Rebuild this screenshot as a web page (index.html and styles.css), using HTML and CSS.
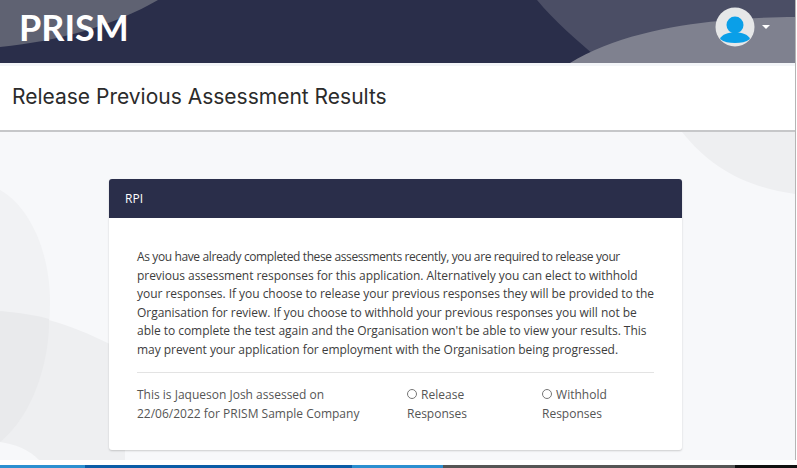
FILE: index.html
```html
<!DOCTYPE html>
<html lang="en">
<head>
  <meta charset="UTF-8">
  <title>Release Previous Assessment Results</title>
  <meta name="viewport" content="width=device-width, initial-scale=1.0">
  <link rel="stylesheet" href="styles.css">
</head>
<body>
  <div class="page">
    <header class="topbar">
      <svg class="topbar-bg" width="795" height="63" viewBox="0 0 795 63" aria-hidden="true">
        <path d="M0 0H158C115 25 60 41 0 47Z" fill="#5f6272"/>
        <path d="M537 0H795V63H603C575 38 555 22 537 0Z" fill="#4b4e65"/>
        <path d="M570 63C610 38 670 25 720 21C750 18 775 17 795 17V63Z" fill="#7f818f"/>
      </svg>
      <div class="logo">PRISM</div>
      <div class="user">
        <svg class="avatar" width="40" height="40" viewBox="0 0 40 40" aria-hidden="true">
          <circle cx="20" cy="20" r="19.5" fill="#e6e7e8"/>
          <circle cx="20" cy="18" r="8.5" fill="#0a9fe8"/>
          <path d="M5 32C7 27 13 25.5 20 25.5C27 25.5 33 27 35 32C31 35 26 36 20 36C14 36 9 35 5 32Z" fill="#0a9fe8"/>
        </svg>
        <span class="caret"></span>
      </div>
    </header>

    <div class="titlebar">
      <h1>Release Previous Assessment Results</h1>
    </div>

    <main class="content">
      <svg class="content-bg" width="795" height="329" viewBox="0 0 795 329" aria-hidden="true">
        <path d="M682 0H795V62C745 55 710 35 682 0Z" fill="#eeeff1"/>
        <path d="M0 58C30 75 50 120 50 170C50 235 30 285 0 310Z" fill="#f1f2f4"/>
        <path d="M0 179C45 183 85 198 125 220V329H40C30 318 15 312 0 310Z" fill="#eeeff1"/>
        <path d="M0 179C20 181 35 183 49 187C50 210 42 275 0 310Z" fill="#e9eaec"/>
      </svg>

      <section class="card">
        <div class="card-head">RPI</div>
        <div class="card-body">
          <p class="intro"><span class="intro-lead">As you have already completed these assessments recently, you are required to release your</span><br>previous assessment responses for this application. Alternatively you can elect to withhold<br>your responses. If you choose to release your previous responses they will be provided to the<br>Organisation for review. If you choose to withhold your previous responses you will not be<br>able to complete the test again and the Organisation won't be able to view your results. This<br>may prevent your application for employment with the Organisation being progressed.</p>
          <hr class="divider">
          <div class="choice-row">
            <div>This is Jaqueson Josh assessed on 22/06/2022 for PRISM Sample Company</div>
            <label class="choice"><input type="radio" name="release"> Release Responses</label>
            <label class="choice"><input type="radio" name="release"> Withhold Responses</label>
          </div>
        </div>
      </section>
    </main>
  </div>

  <div class="gap"></div>
  <div class="taskbar">
    <span class="seg seg-blue1"></span>
    <span class="seg seg-blue2"></span>
    <span class="seg seg-blue3"></span>
    <span class="seg seg-grey"></span>
    <span class="seg seg-black"></span>
  </div>
</body>
</html>
```

FILE: styles.css
```css
* { box-sizing: border-box; }
html, body { height: 100%; }
body {
  margin: 0;
  height: 468px;
  overflow: hidden;
  display: flex;
  flex-direction: column;
  background: #fff;
  font-family: 'Open Sans', sans-serif;
  color: #444;
}
.page {
  width: 796px;
  height: 460px;
  display: flex;
  flex-direction: column;
  border-right: 1px solid #b5b5b5;
}

/* header */
.topbar {
  position: relative;
  height: 63px;
  flex: none;
  display: flex;
  align-items: center;
  justify-content: space-between;
  padding: 0 25px 0 19px;
  background: #2a2e4a;
  overflow: hidden;
}
.topbar-bg { position: absolute; left: 0; top: 0; }
.logo {
  position: relative;
  margin-top: -9px;
  font-family: 'Lato', sans-serif;
  font-size: 36px;
  font-weight: 700;
  color: #fff;
}
.user {
  position: relative;
  margin-top: -10px;
  display: flex;
  align-items: center;
  gap: 7px;
}
.avatar { display: block; }
.caret {
  width: 0;
  height: 0;
  border-left: 4px solid transparent;
  border-right: 4px solid transparent;
  border-top: 4px solid #fff;
}

/* page title */
.titlebar {
  flex: none;
  height: 69px;
  padding: 3px 0 4px;
  border-bottom: 2px solid #c6c7c9;
  background: linear-gradient(#f3f5f8 3px, #fff 3px);
  display: flex;
  align-items: center;
}
.titlebar h1 {
  margin: 0 0 0 12px;
  font-family: 'Inter', sans-serif;
  font-size: 21px;
  font-weight: 400;
  color: #2b2b2b;
}

/* body */
.content {
  position: relative;
  flex: 1;
  padding: 47px 0 0 109px;
  background: #f7f8fa;
  overflow: hidden;
}
.content-bg { position: absolute; left: 0; top: 0; }
.card {
  position: relative;
  width: 573px;
  height: 271px;
  background: #fff;
  border-radius: 3px;
  box-shadow: 0 1px 2px rgba(0, 0, 0, 0.18);
}
.card-head {
  height: 39px;
  padding: 0 16px;
  display: flex;
  align-items: center;
  background: #2a2e4a;
  border-radius: 3px 3px 0 0;
  color: #fff;
  font-size: 12px;
}
.card-body {
  padding: 30px 28px 0;
  font-size: 12px;
  line-height: 19px;
}
.intro {
  margin: 0;
  font-size: 12px;
  letter-spacing: -0.04px;
  line-height: 18.6px;
  white-space: nowrap;
  color: #3d3d3d;
}
.intro-lead { letter-spacing: -0.38px; }
.divider {
  width: 517px;
  margin: 12px 0 12px;
  border: 0;
  border-top: 1px solid #e3e3e3;
}
.choice-row {
  display: grid;
  grid-template-columns: 270px 135px 1fr;
  color: #555;
}
.choice-row > div { width: 240px; }
.choice { display: block; width: 90px; }
.choice input {
  width: 10px;
  height: 10px;
  margin: 0 1px 0 0;
  vertical-align: 0;
}

/* OS taskbar peeking in at the bottom */
.gap { height: 5px; flex: none; }
.taskbar { height: 3px; flex: none; display: flex; }
.seg { display: block; height: 100%; }
.seg-blue1 { width: 85px; background: #2b8fd0; }
.seg-blue2 { width: 267px; background: #0b5ca6; }
.seg-blue3 { width: 91px; background: #2b8fd0; }
.seg-grey { width: 292px; background: #555; }
.seg-black { flex: 1; background: #111; }
```
